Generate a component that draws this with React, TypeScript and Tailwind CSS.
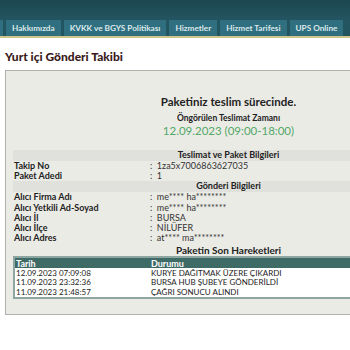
import React from "react";

const navs = ["Hakkımızda", "KVKK ve BGYS Politikası", "Hizmetler", "Hizmet Tarifesi", "UPS Online"];

const info = [
  { label: "Takip No", value: "1za5x7006863627035" },
  { label: "Paket Adedi", value: "1" },
];

const receiver = [
  { label: "Alıcı Firma Adı", value: "me**** ha********" },
  { label: "Alıcı Yetkili Ad-Soyad", value: "me**** ha********" },
  { label: "Alıcı İl", value: "BURSA" },
  { label: "Alıcı İlçe", value: "NİLÜFER" },
  { label: "Alıcı Adres", value: "at**** ma********" },
];

const moves = [
  { date: "12.09.2023 07:09:08", status: "KURYE DAĞITMAK ÜZERE ÇIKARDI" },
  { date: "11.09.2023 23:32:36", status: "BURSA HUB ŞUBEYE GÖNDERİLDİ" },
  { date: "11.09.2023 21:48:57", status: "ÇAĞRI SONUCU ALINDI" },
];

function Row({ label, value }: { label: string; value: string }) {
  return (
    <div className="flex h-[10.3px] items-center text-[9px] leading-none">
      <div className="w-[137px] pl-[1px] font-bold text-[#222]">{label}</div>
      <div className="text-[#333]">:&nbsp; {value}</div>
    </div>
  );
}

export default function App() {
  return (
    <div className="w-[350px] h-[350px] overflow-hidden bg-white font-['Lato',sans-serif]">
      {/* Header */}
      <div className="h-[20px] bg-gradient-to-b from-[#1c4650] to-[#235561]" />
      <nav className="flex h-[18px] gap-[3px] bg-[#235561] border-b-2 border-[#cfc48c] -ml-[2px]">
        <div className="w-[5px] bg-[#2f6f7f]" />
        {navs.map((n) => (
          <div
            key={n}
            className="flex items-center whitespace-nowrap bg-[#2f6f7f] px-[6px] text-[8.2px] font-bold text-[#dbe9ec]"
          >
            {n}
          </div>
        ))}
      </nav>

      {/* Title */}
      <h1 className="pl-[5px] pt-[10px] text-[12px] font-black text-[#3a1a1a]">Yurt içi Gönderi Takibi</h1>

      {/* Panel */}
      <div className="ml-[5px] mt-[4px] w-[446px] pb-[15px] border-t border-l border-b border-[#b0b0ad] bg-[#ebebe6]">
        <div className="pt-[22px] text-center">
          <div className="text-[11.5px] font-bold text-[#222]">Paketiniz teslim sürecinde.</div>
          <div className="mt-[2px] text-[8.5px] font-bold text-[#222]">Öngörülen Teslimat Zamanı</div>
          <div className="text-[11.5px] leading-[12px] text-[#52a866]">12.09.2023 (09:00-18:00)</div>
        </div>

        <div className="mx-[7px] mt-[13px]">
          <div className="h-[10.5px] bg-[#e0e0dc] text-center text-[9px] font-bold leading-[10.5px] text-[#222]">
            Teslimat ve Paket Bilgileri
          </div>
          {info.map((r) => (
            <Row key={r.label} {...r} />
          ))}
          <div className="h-[10.5px] bg-[#e0e0dc] text-center text-[9px] font-bold leading-[10.5px] text-[#222]">
            Gönderi Bilgileri
          </div>
          {receiver.map((r) => (
            <Row key={r.label} {...r} />
          ))}
          <div className="mt-[1px] h-[12px] text-center text-[10px] font-bold leading-[12px] text-[#222]">
            Paketin Son Hareketleri
          </div>

          {/* Movements */}
          <div className="border-2 border-[#8ea6a2] bg-white">
            <div className="flex h-[10px] items-center bg-[#3f6b67] text-[9px] font-bold leading-none text-white">
              <div className="w-[136px] pl-[1px]">Tarih</div>
              <div>Durumu</div>
            </div>
            {moves.map((m) => (
              <div key={m.date} className="flex h-[9.5px] items-center text-[8px] leading-none text-[#222]">
                <div className="w-[136px] pl-[1px]">{m.date}</div>
                <div>{m.status}</div>
              </div>
            ))}
          </div>
        </div>
      </div>
    </div>
  );
}
